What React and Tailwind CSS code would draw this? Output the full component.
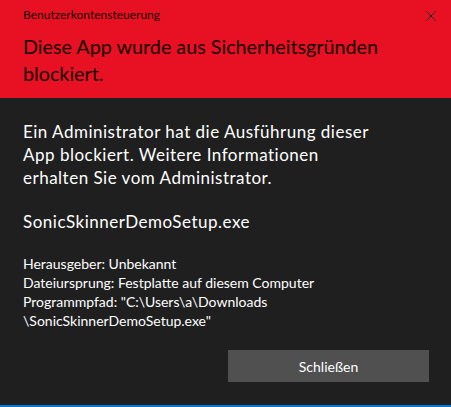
export default function App() {
  return (
    <div className="w-[451px] h-[407px] flex flex-col bg-[#1f1f1f] font-['Lato',sans-serif] overflow-hidden">
      {/* red header */}
      <div className="h-[98px] shrink-0 bg-[#e81123] pl-[23px] pr-[14px] pt-[7px] text-[#140000]">
        <div className="flex items-start justify-between">
          <span className="text-[12px] leading-4">Benutzerkontensteuerung</span>
          <svg width="10" height="10" viewBox="0 0 10 10" className="mt-[4px] mr-[1px]">
            <path d="M0.5 0.5 L9.5 9.5 M9.5 0.5 L0.5 9.5" stroke="#1a0000" strokeWidth="1" />
          </svg>
        </div>
        <h1 className="mt-[10px] text-[19.75px] leading-[27px] font-normal">
          Diese App wurde aus Sicherheitsgründen
          <br />
          blockiert.
        </h1>
      </div>

      {/* body */}
      <div className="flex-1 flex flex-col pl-[23px] pr-[22px] text-white">
        <p className="mt-[22px] text-[17px] leading-[23px] tracking-[0.5px]">
          Ein Administrator hat die Ausführung dieser
          <br />
          App blockiert. Weitere Informationen
          <br />
          erhalten Sie vom Administrator.
        </p>
        <p className="mt-[21px] text-[17px] leading-[23px] tracking-[0.5px]">SonicSkinnerDemoSetup.exe</p>
        <div className="mt-[21px] text-[14px] leading-[19px]">
          <div>Herausgeber: Unbekannt</div>
          <div>Dateiursprung: Festplatte auf diesem Computer</div>
          <div>Programmpfad: "C:\Users\a\Downloads</div>
          <div>\SonicSkinnerDemoSetup.exe"</div>
        </div>
        <div className="mt-[20px] flex justify-end">
          <button className="w-[201px] h-[32px] bg-[#505050] text-white text-[14px]">
            Schließen
          </button>
        </div>
      </div>

      <div className="h-[2px] shrink-0 bg-[#0078d7]" />
    </div>
  );
}
